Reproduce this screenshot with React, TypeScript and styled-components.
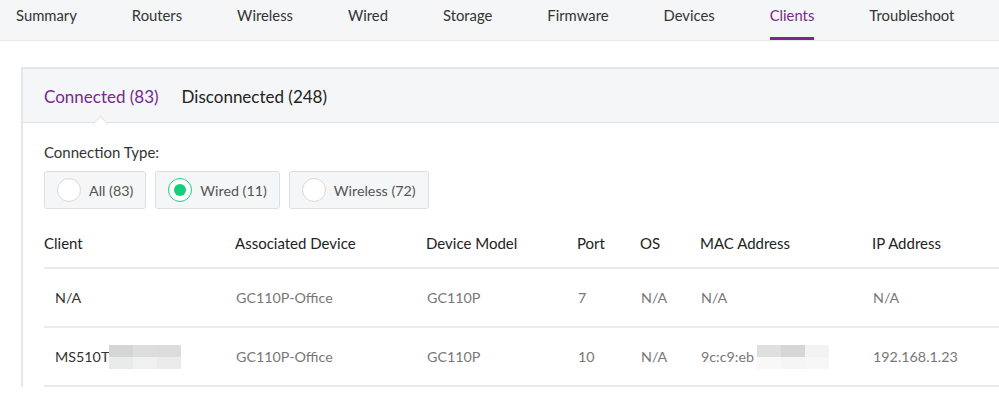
import styled, { createGlobalStyle, css } from 'styled-components';

const GlobalStyle = createGlobalStyle`
  html, body {
    margin: 0;
    padding: 0;
    background: #ffffff;
    font-family: Lato, "Open Sans", sans-serif;
    overflow: hidden;
  }
`;

const PURPLE = '#782a8a';

const navItems = [
  'Summary',
  'Routers',
  'Wireless',
  'Wired',
  'Storage',
  'Firmware',
  'Devices',
  'Clients',
  'Troubleshoot',
];

const columns = [
  'Client',
  'Associated Device',
  'Device Model',
  'Port',
  'OS',
  'MAC Address',
  'IP Address',
];

type Row = {
  client: string;
  clientBlur?: string[][];
  device: string;
  model: string;
  port: string;
  os: string;
  mac: string;
  macBlur?: string[][];
  ip: string;
};

const rows: Row[] = [
  {
    client: 'N/A',
    device: 'GC110P-Office',
    model: 'GC110P',
    port: '7',
    os: 'N/A',
    mac: 'N/A',
    ip: 'N/A',
  },
  {
    client: 'MS510T',
    clientBlur: [
      ['#d4d6d6', '#dcdddd', '#dbdcdc'],
      ['#e9eaea', '#f0f0f0', '#ebebeb'],
    ],
    device: 'GC110P-Office',
    model: 'GC110P',
    port: '10',
    os: 'N/A',
    mac: '9c:c9:eb',
    macBlur: [
      ['#dedfdf', '#d5d6d6', '#f3f3f3'],
      ['#f8f8f8', '#f5f5f5', '#f7f7f7'],
    ],
    ip: '192.168.1.23',
  },
];

const radios = [
  { label: 'All (83)', checked: false },
  { label: 'Wired (11)', checked: true },
  { label: 'Wireless (72)', checked: false },
];

const App = () => {
  return (
    <Page>
      <GlobalStyle />
      <Nav>
        {navItems.map((item) => (
          <NavItem key={item} $active={item === 'Clients'}>
            {item}
          </NavItem>
        ))}
      </Nav>
      <Content>
        <Card>
          <CardHeader>
            <Tab $active>
              Connected (83)
              <Caret />
            </Tab>
            <Tab>Disconnected (248)</Tab>
          </CardHeader>
          <CardBody>
            <FilterLabel>Connection Type:</FilterLabel>
            <RadioGroup>
              {radios.map((r) => (
                <RadioBox key={r.label}>
                  <RadioCircle $checked={r.checked} />
                  <RadioLabel>{r.label}</RadioLabel>
                </RadioBox>
              ))}
            </RadioGroup>
            <Table>
              <HeadRow>
                {columns.map((c) => (
                  <HeadCell key={c}>{c}</HeadCell>
                ))}
              </HeadRow>
              {rows.map((r, i) => (
                <BodyRow key={i}>
                  <ClientCell>
                    {r.client}
                    {r.clientBlur && <Redact cells={r.clientBlur} />}
                  </ClientCell>
                  <Cell>{r.device}</Cell>
                  <Cell>{r.model}</Cell>
                  <Cell>{r.port}</Cell>
                  <Cell>{r.os}</Cell>
                  <Cell>
                    {r.mac}
                    {r.macBlur && <Redact cells={r.macBlur} $offset={3} />}
                  </Cell>
                  <Cell>{r.ip}</Cell>
                </BodyRow>
              ))}
            </Table>
          </CardBody>
        </Card>
      </Content>
    </Page>
  );
};

const Redact = ({ cells, $offset = 0 }: { cells: string[][]; $offset?: number }) => (
  <Mosaic $offset={$offset}>
    {cells.flat().map((c, i) => (
      <MosaicCell key={i} style={{ background: c }} />
    ))}
  </Mosaic>
);

export default App;

const Page = styled.div`
  width: 999px;
  height: 398px;
  overflow: hidden;
`;

const Nav = styled.nav`
  display: flex;
  align-items: stretch;
  gap: 55px;
  height: 40px;
  padding-left: 16px;
  background: #f4f6f7;
  border-bottom: 1px solid #e6e8e9;
`;

const NavItem = styled.div<{ $active?: boolean }>`
  display: flex;
  align-items: center;
  height: 100%;
  padding-bottom: 8px;
  box-sizing: border-box;
  font-size: 14.8px;
  color: #333;
  white-space: nowrap;
  border-bottom: 3px solid transparent;
  ${(p) =>
    p.$active &&
    css`
      color: ${PURPLE};
      border-bottom-color: ${PURPLE};
    `}
`;

const Content = styled.div`
  padding: 26px 0 0 21px;
`;

const Card = styled.section`
  width: 1000px;
  border: 2px solid #e4e6e7;
  border-right: none;
  border-bottom: none;
  background: #fff;
`;

const CardHeader = styled.div`
  display: flex;
  align-items: center;
  gap: 23px;
  height: 54px;
  padding: 1px 0 0 21px;
  box-sizing: border-box;
  background: #f4f6f7;
  border-bottom: 1px solid #dfe1e2;
`;

const Tab = styled.div<{ $active?: boolean }>`
  position: relative;
  font-size: 17px;
  color: ${(p) => (p.$active ? PURPLE : '#222')};
  white-space: nowrap;
`;

const Caret = styled.span`
  position: absolute;
  left: 50%;
  bottom: -22px;
  width: 10px;
  height: 10px;
  margin-left: -6px;
  background: #fff;
  border-left: 1px solid #dfe1e2;
  border-top: 1px solid #dfe1e2;
  transform: rotate(45deg);
`;

const CardBody = styled.div`
  padding: 19px 0 0 21px;
`;

const FilterLabel = styled.div`
  font-size: 15px;
  line-height: 20px;
  color: #333;
`;

const RadioGroup = styled.div`
  display: flex;
  gap: 9px;
  margin-top: 9px;
`;

const RadioBox = styled.label`
  display: flex;
  align-items: center;
  gap: 8px;
  height: 38px;
  padding: 0 12px 0 12px;
  box-sizing: border-box;
  background: #f4f6f7;
  border: 1px solid #dcdedf;
  border-radius: 3px;
`;

const RadioCircle = styled.span<{ $checked?: boolean }>`
  position: relative;
  width: 24px;
  height: 24px;
  box-sizing: border-box;
  border-radius: 50%;
  background: #fff;
  border: 1px solid ${(p) => (p.$checked ? '#18d07f' : '#d6d8d9')};
  ${(p) =>
    p.$checked &&
    css`
      &::after {
        content: '';
        position: absolute;
        left: 50%;
        top: 50%;
        width: 12px;
        height: 12px;
        margin: -6px 0 0 -6px;
        border-radius: 50%;
        background: #12cf78;
      }
    `}
`;

const RadioLabel = styled.span`
  font-size: 14.3px;
  color: #555;
  white-space: nowrap;
`;

const gridCols = '191px 191px 151px 63px 60px 172px 1fr';

const Table = styled.div`
  margin-top: 10px;
`;

const HeadRow = styled.div`
  display: grid;
  grid-template-columns: ${gridCols};
  align-items: center;
  height: 50px;
  box-sizing: border-box;
  border-bottom: 2px solid #e9ebeb;
`;

const HeadCell = styled.div`
  font-size: 15px;
  color: #222;
  white-space: nowrap;
`;

const BodyRow = styled.div`
  display: grid;
  grid-template-columns: ${gridCols};
  align-items: center;
  height: 59px;
  box-sizing: border-box;
  border-bottom: 2px solid #e9ebeb;
`;

const Cell = styled.div`
  display: flex;
  align-items: center;
  font-size: 14.3px;
  color: #777;
  white-space: nowrap;
  padding-left: 1px;
`;

const ClientCell = styled(Cell)`
  padding-left: 11px;
  color: #333;
`;

const Mosaic = styled.span<{ $offset: number }>`
  display: grid;
  margin-left: ${(p) => p.$offset}px;
  grid-template-columns: repeat(3, 24px);
  grid-template-rows: repeat(2, 12px);
`;

const MosaicCell = styled.span`
  display: block;
`;
